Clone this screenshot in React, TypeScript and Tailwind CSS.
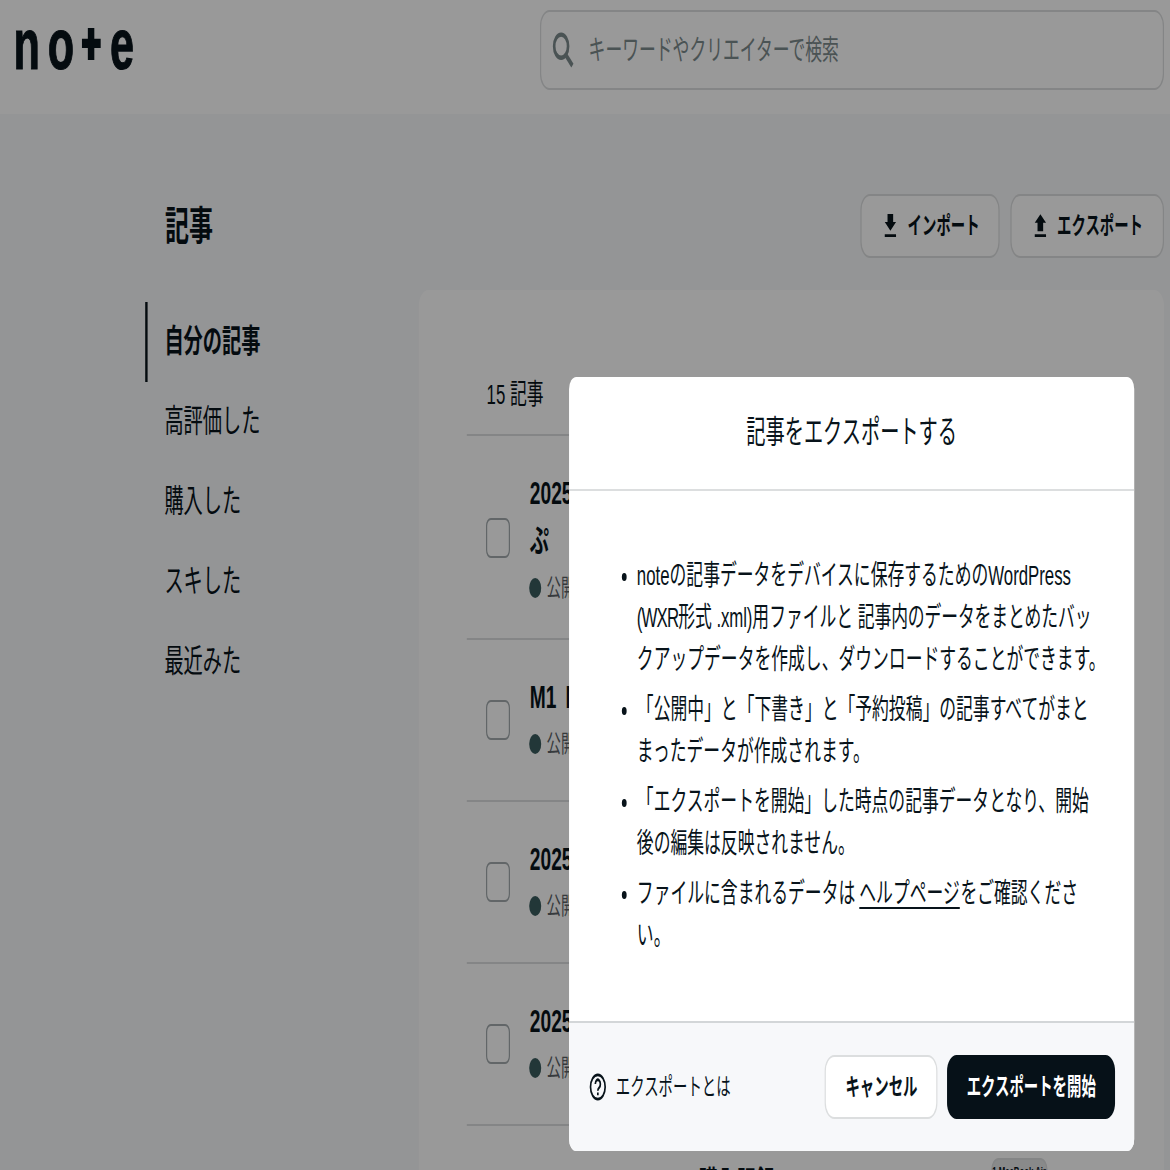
import type { ReactNode } from "react"

const menuItems = ["自分の記事", "高評価した", "購入した", "スキした", "最近みた"]

const articles = [
  { title: ["2025年のまとめ", "ぷ"], height: "h-[102px]" },
  { title: ["M1 MacBook"], height: "h-[81px]" },
  { title: ["2025年の記録"], height: "h-[81px]" },
  { title: ["2025年の日記"], height: "h-[81px]" },
]

const Logo = () => (
  <svg
    width="120"
    height="57"
    viewBox="0 0 120 57"
    fill="#08131a"
    fontFamily="Liberation Sans"
    fontWeight="700"
    fontSize="36"
    role="img"
    aria-label="note"
  >
    <g stroke="#08131a" strokeWidth="0.6">
      <text x="11.2" y="34.7">n</text>
      <text x="39.8" y="34.7">o</text>
      <text x="91.6" y="34.7">e</text>
    </g>
    <path d="M73.2 14h5.4v5.4h5.3v4.6h-5.3v6h-5.4v-6h-4.9v-4.6h4.9z" />
  </svg>
)

const SearchIcon = () => (
  <svg width="20" height="20" viewBox="0 0 20 20" fill="none" stroke="currentColor">
    <circle cx="7.6" cy="8.1" r="5.8" strokeWidth="2.2" />
    <path d="M11.6 12.6l5.4 5.2" strokeWidth="2.6" />
  </svg>
)

const ImportIcon = () => (
  <svg width="16" height="16" viewBox="0 0 16 16" fill="currentColor">
    <path d="M5.6 2h4.7v4h2.4L8 10.4 3.3 6h2.3zM3.3 12.1h9.4v1.4H3.3z" />
  </svg>
)

const ExportIcon = () => (
  <svg width="16" height="16" viewBox="0 0 16 16" fill="currentColor">
    <path d="M8 2.1l4.7 4.3h-2.4v4.2H5.6V6.4H3.3zM3.3 12.1h9.4v1.4H3.3z" />
  </svg>
)

const HelpIcon = () => (
  <svg width="16" height="16" viewBox="0 0 16 16" fill="none" stroke="currentColor" strokeWidth="1.4">
    <circle cx="8" cy="8" r="6.1" />
    <path d="M5.9 6.5a2.1 2.1 0 1 1 3.2 1.8c-.7.4-1.1.8-1.1 1.6" />
    <path d="M8 10.7v1.4" />
  </svg>
)

const OutlineButton = ({ children }: { children: ReactNode }) => (
  <button className="flex h-8 items-center rounded-lg border border-[#dcdedf] bg-white px-4 text-xs font-bold whitespace-nowrap">
    {children}
  </button>
)

const Header = () => (
  <header className="flex h-[57px] items-start justify-between bg-white pr-[5.5px]">
    <Logo />
    <div className="mt-[5px] flex h-10 w-[520px] items-center rounded-lg border border-[#dcdedf] pl-[9px] text-[#7c8a8c]">
      <SearchIcon />
      <span className="ml-[11px] text-sm">キーワードやクリエイターで検索</span>
    </div>
  </header>
)

const Sidebar = () => (
  <nav className="w-[228px] shrink-0 pt-[6px]">
    {menuItems.map((item, i) => (
      <div
        key={item}
        className={
          i === 0
            ? "flex h-10 items-center border-l-2 border-[#08131a] pl-[14px] font-bold"
            : "flex h-10 items-center border-l-2 border-transparent pl-[14px]"
        }
      >
        {item}
      </div>
    ))}
  </nav>
)

const ArticleList = () => (
  <section className="h-[460px] w-[621px] shrink-0 rounded-lg bg-white px-10 pt-8">
    <div className="flex h-[41px] items-center border-b border-[#dcdedf] pl-[16.5px] text-sm">15 記事</div>
    {articles.map((article, i) => (
      <div key={i} className={`flex items-center border-b border-[#dcdedf] pl-4 ${article.height}`}>
        <span className="size-5 rounded border border-[#a3abae]" />
        <div className="ml-4 h-full pt-[17px] whitespace-nowrap">
          {article.title.map((line) => (
            <p key={line} className="pl-[0.5px] leading-6 font-bold [word-spacing:3px]">
              {line}
            </p>
          ))}
          <p className="-mt-px flex h-6 items-center gap-[4.5px] text-xs text-[#5b6266]">
            <span className="size-2.5 rounded-full bg-[#3a5c5e]" />
            公開中
          </p>
        </div>
      </div>
    ))}
    <div className="flex items-start pt-4">
      <p className="mt-px ml-[193px] leading-6 font-bold">購入記録</p>
      <span className="ml-[180px] flex h-5 w-[46.5px] justify-center rounded-md border border-[#dcdedf] bg-[#e4e6e7] pt-[2px] text-[6.5px] leading-[8px] font-bold whitespace-nowrap">
        1 MacBook Air
      </span>
    </div>
  </section>
)

const Bullet = ({ children }: { children: ReactNode }) => (
  <li className="flex">
    <span className="mt-[8.5px] mr-[8.5px] size-[4.5px] shrink-0 rounded-full bg-[#08131a]" />
    <p className="leading-[21px] whitespace-nowrap">{children}</p>
  </li>
)

const ExportModal = () => (
  <div className="absolute top-[188px] left-[474px] w-[471px] translate-x-[0.2px] translate-y-[0.5px] overflow-hidden rounded-md bg-white">
    <h2 className="flex h-[57px] items-center justify-center border-b border-[#dcdedf] text-base">
      記事をエクスポートする
    </h2>
    <ul className="flex flex-col gap-1 py-8 pl-[43.5px] text-sm">
      <Bullet>
        noteの記事データをデバイスに保存するためのWordPress
        <br />
        <span className="tracking-[-0.7px]">(WXR</span>形式 <span className="tracking-[-0.1px]">.xml)</span>
        用ファイルと <span className="tracking-[-0.1px]">記事内のデータをまとめたバッ</span>
        <br />
        クアップデータを作成し、ダウンロードすることができます。
      </Bullet>
      <Bullet>
        「公開中」と「下書き」と「予約投稿」の記事すべてがまと
        <br />
        まったデータが作成されます。
      </Bullet>
      <Bullet>
        「エクスポートを開始」した時点の記事データとなり、開始
        <br />
        後の編集は反映されません。
      </Bullet>
      <Bullet>
        ファイルに含まれるデータは{" "}
        <a className="-ml-[0.5px] underline decoration-1 underline-offset-2 [text-decoration-skip-ink:none]">
          ヘルプページ
        </a>
        <span className="ml-[0.5px]">をご確認くださ</span>
        <br />
        い。
      </Bullet>
    </ul>
    <footer className="flex h-[65px] items-center border-t border-[#d3d6d8] bg-[#f7f8fa] px-4">
      <a className="flex items-center gap-[7px] text-xs">
        <HelpIcon />
        エクスポートとは
      </a>
      <div className="ml-auto flex gap-2">
        <OutlineButton>キャンセル</OutlineButton>
        <button className="h-8 rounded-lg bg-[#061118] px-4 text-xs font-bold whitespace-nowrap text-white">
          エクスポートを開始
        </button>
      </div>
    </footer>
  </div>
)

export default function App() {
  return (
    <div className="h-[1170px] w-[1170px] overflow-hidden">
      <div className="relative h-[585px] w-[975px] origin-top-left [transform:scale(1.2,2)] overflow-hidden bg-[#f7f8fa] font-['Liberation_Sans','Noto_Sans_CJK_JP',sans-serif] text-[#08131a]">
        <Header />
        <main className="pr-[5.5px] pl-[121px]">
          <div className="flex h-[88px] items-center justify-between pt-[24px]">
            <h1 className="-mt-px pl-[16.5px] text-xl font-bold">記事</h1>
            <div className="flex gap-[8.5px]">
              <OutlineButton>
                <ImportIcon />
                <span className="ml-[6px]">インポート</span>
              </OutlineButton>
              <OutlineButton>
                <ExportIcon />
                <span className="ml-[6px]">エクスポート</span>
              </OutlineButton>
            </div>
          </div>
          <div className="flex">
            <Sidebar />
            <ArticleList />
          </div>
        </main>
        <div className="absolute inset-0 bg-black/40" />
        <ExportModal />
      </div>
    </div>
  )
}
